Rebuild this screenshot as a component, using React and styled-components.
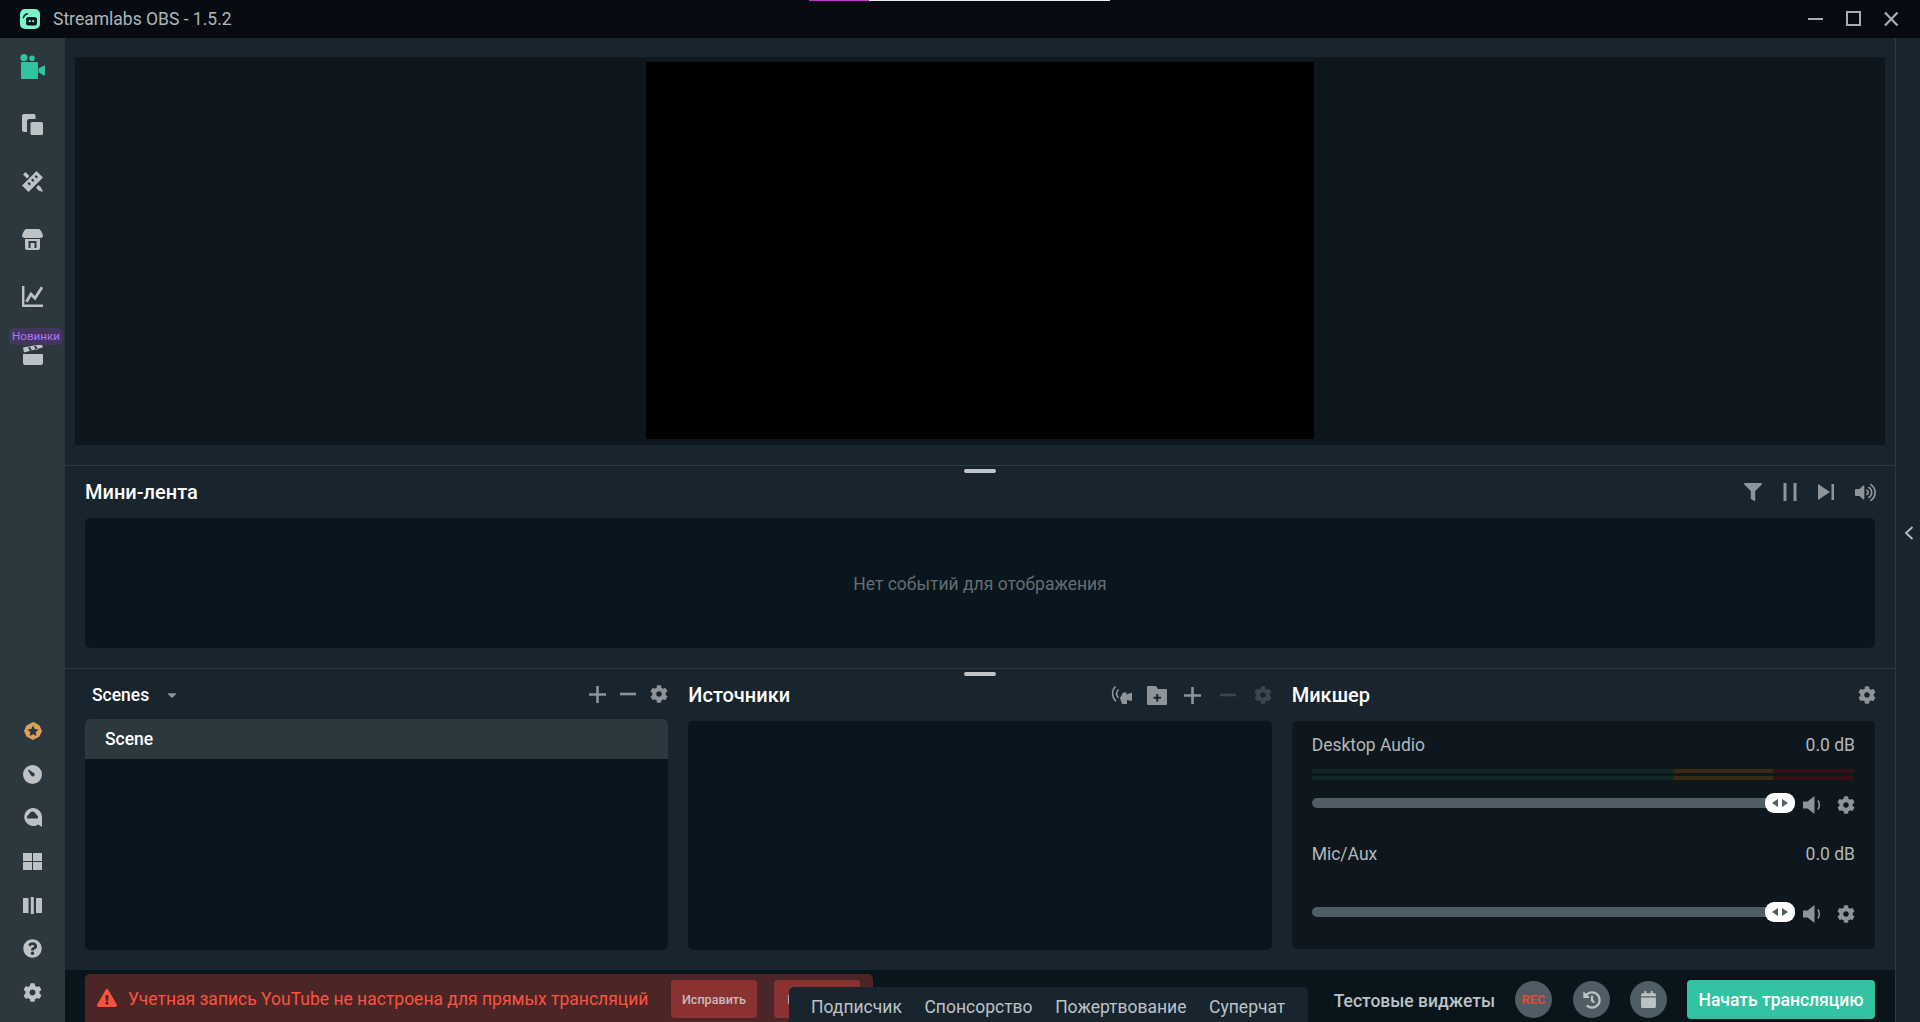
import React from "react";
import styled, { createGlobalStyle } from "styled-components";
import { FaCog, FaFilter, FaVolumeUp, FaQuestionCircle, FaExclamationTriangle, FaCaretDown, FaHistory, FaCalendar } from "react-icons/fa";

const Global = createGlobalStyle`
  html, body { margin: 0; padding: 0; background: #19252e; }
  * { box-sizing: border-box; }
  body { font-family: Roboto, "Noto Sans", sans-serif; overflow: hidden; }
`;

const Page = styled.div`
  width: 1920px; height: 1022px; display: flex; flex-direction: column; position: relative; overflow: hidden;
`;
const TitleBar = styled.header`
  height: 38px; flex: none; background: #050b11; display: flex; align-items: center; padding: 0 21px 0 20px; position: relative;
`;
const LoadStrip = styled.div`
  position: absolute; left: 809px; top: 0; width: 301px; height: 1px;
  background: linear-gradient(to right, #c233d6 0 60px, #eeeeee 60px);
`;
const Logo = styled.div`
  width: 20px; height: 20px; border-radius: 5px; background: #7cf5cb; display: flex; align-items: center; justify-content: center; color: #0a1a1d;
`;
const AppName = styled.span`
  margin-left: 13px; font-size: 17.5px; color: #afb5b9; flex: 1; padding-bottom: 1px;
`;
const WinControls = styled.div`
  display: flex; align-items: center; gap: 22px; color: #a9adb0;
`;
const Body = styled.div`
  flex: 1; display: flex; min-height: 0;
`;
const SideNav = styled.nav`
  width: 65px; flex: none; background: #2c373e; display: flex; flex-direction: column; justify-content: space-between; padding-bottom: 8px;
`;
const NavGroup = styled.div`
  display: flex; flex-direction: column;
`;
const NavItem = styled.div`
  height: ${p => p.$h}px; display: flex; align-items: center; justify-content: center; position: relative;
  color: ${p => p.$color || "#bdc2c5"};
`;
const Badge = styled.span`
  position: absolute; left: 9px; top: 2px; height: 17px; width: 54px; background: #43355e; border-radius: 5px;
  color: #ad75f5; font-size: 11.6px; line-height: 17px; text-align: center; z-index: 1;
`;
const Main = styled.main`
  flex: 1; min-width: 0; display: flex; flex-direction: column; background: #19252e;
`;
const PreviewWrap = styled.section`
  height: 427px; flex: none; padding: 19px 10px 20px;
`;
const Preview = styled.div`
  height: 100%; background: #0d171d; display: flex; justify-content: center; padding: 5px 0 6px;
`;
const Canvas = styled.div`
  width: 668px; background: #000;
`;
const Divider = styled.div`
  height: 1px; flex: none; background: #2d3a43; position: relative;
`;
const Handle = styled.span`
  position: absolute; left: 899px; top: 4px; width: 32px; height: 4px; border-radius: 2px; background: #bfc4c7;
`;
const Feed = styled.section`
  height: 202px; flex: none; padding: 0 20px;
`;
const PanelHead = styled.div`
  height: ${p => p.$h || 50}px; display: flex; align-items: center; justify-content: space-between; padding-left: ${p => p.$pl || 0}px;
`;
const PanelTitle = styled.h2`
  margin: 0; font-size: 20px; font-weight: 500; color: #fff;
`;
const Tools = styled.div`
  display: flex; align-items: center; gap: ${p => p.$gap || 0}px; color: #8e9498; margin-right: ${p => p.$mr || 0}px;
`;
const ToolIcon = styled.span`
  display: flex; align-items: center; justify-content: center; color: ${p => p.$dim ? "#3b464d" : "#8e9498"};
  margin-left: ${p => p.$ml || 0}px;
`;
const FeedBox = styled.div`
  height: 130px; background: #0a161d; border-radius: 5px; display: flex; align-items: center; justify-content: center;
  font-size: 17.5px; color: #646e73; padding-top: 1px;
`;
const Docks = styled.section`
  flex: 1; min-height: 0; padding: 0 20px; display: grid; grid-template-columns: repeat(3, 1fr); gap: 20px;
`;
const Dock = styled.div`
  display: flex; flex-direction: column;
`;
const SceneSelect = styled.div`
  display: flex; align-items: center; gap: 16px; color: #fff; font-size: 17.5px; font-weight: 500; padding-top: 1px;
`;
const SceneBox = styled.div`
  height: 231px; background: #0a161d; border-radius: 5px; overflow: hidden;
`;
const SceneRow = styled.div`
  height: 40px; background: #2c373e; border-radius: 5px 5px 0 0; display: flex; align-items: center; padding-left: 20px;
  color: #fff; font-size: 17.5px; font-weight: 500;
`;
const SourcesBox = styled.div`
  height: 229px; background: #0a161d; border-radius: 5px;
`;
const MixerBox = styled.div`
  height: 228px; background: #0d171d; border-radius: 5px; padding: 14px 20px 0 20px; display: flex; flex-direction: column; gap: 31px;
`;
const Channel = styled.div`
  display: flex; flex-direction: column;
`;
const ChannelHead = styled.div`
  height: 20px; display: flex; align-items: center; justify-content: space-between; font-size: 17.5px; color: #b3b8bb;
`;
const Meter = styled.div`
  height: 11px; margin: 14px 1px 13px 0; display: flex; flex-direction: column; gap: 3px; visibility: ${p => p.$hidden ? "hidden" : "visible"};
`;
const MeterBar = styled.div`
  height: 4px; background: linear-gradient(to right, #0d2a24 0 362px, #3a2a10 362px 461px, #360f0f 461px);
`;
const FaderRow = styled.div`
  height: 20px; display: flex; align-items: center;
`;
const Track = styled.div`
  flex: 1; height: 10px; border-radius: 5px; background: #4f5e65; position: relative;
`;
const Thumb = styled.span`
  position: absolute; right: 0; top: -5px; width: 30px; height: 20px; border-radius: 9px; background: #fff;
  display: flex; align-items: center; justify-content: center; color: #4f5e65;
`;
const FaderIcons = styled.div`
  display: flex; align-items: center; width: 60px; flex: none; padding-left: 8px; color: #8e9498; padding-top: 4px; gap: 14px;
`;
const Footer = styled.footer`
  height: 52px; flex: none; background: #09141b; padding: 0 20px; display: flex; overflow: hidden;
`;
const Alert = styled.div`
  flex: 0 0 788px; min-width: 0; overflow: hidden; margin-top: 4px; height: 60px; background: #4c2526; border-radius: 5px; display: flex; padding: 6px 0 0 13px; color: #fb5340;
`;
const AlertIcon = styled.span`
  display: flex; height: 38px; align-items: center; margin-right: 11px; padding-bottom: 2px; margin-left: -1px;
`;
const AlertText = styled.span`
  line-height: 39px; width: 543px; white-space: nowrap; font-size: 17.5px; flex: none;
`;
const AlertButton = styled.button`
  width: 86px; height: 38px; border: 0; border-radius: 4px; background: #8a3232; color: #c9bab9; font: 500 12.6px Roboto, sans-serif; margin-right: 17px; padding: 0; flex: none;
`;
const Widgets = styled.div`
  margin: 17px 0 0 -84px; width: 519px; height: 40px; background: #19252e; border-radius: 5px 5px 0 0; position: relative; z-index: 1;
  display: flex; padding: 10px 0 0 22px; gap: 22.6px; font-size: 17.5px; color: #bcc3c8; line-height: 20px; flex: none; white-space: nowrap;
`;
const Controls = styled.div`
  flex: 1; display: flex; justify-content: flex-end; align-items: flex-start; padding-top: 10px; gap: 20px;
`;
const TestLabel = styled.span`
  font-size: 17.5px; color: #bcc3c8; font-weight: 500; line-height: 42px; height: 37px; white-space: nowrap;
`;
const RoundButton = styled.div`
  width: 37px; height: 37px; margin-top: 1px; margin-right: ${p => p.$mr || 0}px; border-radius: 50%; background: #4f5e65; display: flex; align-items: center; justify-content: center;
  color: ${p => p.$color || "#bdc2c5"}; font-size: 13px; font-weight: 700;
`;
const GoLive = styled.div`
  width: 188px; height: 39px; background: #31c3a2; border-radius: 4px; color: #fff; font-size: 17.5px; font-weight: 500; display: flex; align-items: center; justify-content: center; white-space: nowrap; padding-top: 1px;
`;
const RightRail = styled.aside`
  width: 25px; flex: none; border-left: 1px solid #2d3a43; background: #19252e; display: flex; flex-direction: column; align-items: center; padding: 488px 0 0 1px; color: #b5c0c7;
`;

const Svg = ({ w, h, vb, children, ...rest }) => (
  <svg width={w} height={h} viewBox={vb || `0 0 ${w} ${h}`} fill="currentColor" {...rest}>{children}</svg>
);

const IconCamera = () => (
  <Svg w={25} h={25}>
    <circle cx="4" cy="3.700" r="3.600" fill="#31c3a2" /><circle cx="12" cy="4.200" r="2.800" fill="#31c3a2" />
    <rect x="1" y="8" width="17" height="17" rx="1" fill="#31c3a2" />
    <path d="M18.500 14.500 24 11.500c.6-.3 1 0 1 .6v8.800c0 .6-.4.9-1 .6l-5.500-3z" fill="#31c3a2" />
  </Svg>
);
const IconCopies = () => (
  <Svg w={21} h={21}>
    <rect x="8.500" y="8" width="12.500" height="13" rx="1.500" />
    <path d="M2 0h10a1.500 1.500 0 0 1 1.500 1.500V5H7.500A2.500 2.500 0 0 0 5 7.500V18H2a2 2 0 0 1-2-2V2a2 2 0 0 1 2-2z" />
  </Svg>
);
const IconTools = () => (
  <Svg w={21} h={21}>
    <path fillRule="evenodd" d="M14.500 0 21 6.500 6.500 21 0 14.500zM14 4l-1.500 1.500 2 2L16 6zM10.500 7.500 9 9l2 2 1.500-1.500zM7 11l-1.500 1.500 2 2L9 13z" />
    <path d="M1 3.500 3.500 1l4 4L5 7.500zM14 16.500l2.500-2.500 2.500 2.500L21 21l-4.500-1.500z" />
  </Svg>
);
const IconStore = () => (
  <Svg w={21} h={21}>
    <path d="M4 0h13c1.200 0 3.500 4.500 4 6.500 0 1.600-1 2.500-2.500 2.500H2.500C1 9 0 8.100 0 6.500 .5 4.500 2.800 0 4 0z" />
    <path fillRule="evenodd" d="M3 10h15v9a2 2 0 0 1-2 2H5a2 2 0 0 1-2-2zM6.500 12v7h2v-5h4v5h2v-7z" />
  </Svg>
);
const IconChart = () => (
  <Svg w={21} h={21}>
    <path d="M0 0h2.400v18.600H21V21H1a1 1 0 0 1-1-1z" />
    <path d="M4.500 15.800 9 8l4 4.300L20 1.200" fill="none" stroke="currentColor" strokeWidth="2.800" />
  </Svg>
);
const IconClapper = () => (
  <Svg w={20} h={21}>
    <path d="M0 10h20v9a2 2 0 0 1-2 2H2a2 2 0 0 1-2-2z" />
    <path fillRule="evenodd" d="m0 3.500 19-3.500.8 3.500L1 8.500zM5 3.400 7 7l2-.5-2-3.600zM11 2.300l2 3.600 2-.5-2-3.600z" />
  </Svg>
);
const IconStar = () => (
  <Svg w={18} h={18}>
    <path fillRule="evenodd" fill="#d9a35a" d="M9 0l2 .8L15.500 3.500 18 9l-2.500 5.500L9 18l-6.500-3.500L0 9l2.500-5.500zM9 3.500 7.300 7 3.500 7.500l2.800 2.700-.7 3.800L9 12.200l3.400 1.800-.7-3.800 2.800-2.700L10.700 7z" />
  </Svg>
);
const IconGauge = () => (
  <Svg w={19} h={19}>
    <path fillRule="evenodd" d="M9.500 0a9.500 9.500 0 1 1 0 19 9.500 9.500 0 0 1 0-19zM6 4.500l-1 1L8.500 11a2 2 0 0 0 3.200-1.600 2 2 0 0 0-2-2z" />
  </Svg>
);
const IconChat = () => (
  <Svg w={19} h={19}>
    <path fillRule="evenodd" d="M9.500 0A9 9 0 0 1 19 8.500V19l-3.800-2.500A9 9 0 1 1 9.500 0zm0 3.500C7.700 3.500 6.300 5.500 5.500 7 4 7.500 3.500 9 4.500 10.500h10c1-1.500 .4-3-1-3.500C13 5.500 11.300 3.500 9.500 3.500z" />
  </Svg>
);
const IconGrid = () => (
  <Svg w={19} h={17}>
    <rect width="9" height="8" /><rect x="10" width="9" height="8" /><rect y="9" width="9" height="8" /><rect x="10" y="9" width="9" height="8" />
  </Svg>
);
const IconColumns = () => (
  <Svg w={19} h={17}>
    <rect y="1" width="5.500" height="15" rx=".5" /><rect x="7.800" width="3" height="17" /><rect x="13" y="1" width="6" height="15" rx=".5" />
  </Svg>
);
const IconLogo = () => (
  <Svg w={16} h={14}>
    <path d="M2 6.500a4.500 4.500 0 0 1 4-4l-.2-1.600A6 6 0 0 0 .6 6.300z" />
    <rect x="4" y="5" width="11" height="8.500" rx="2.500" />
    <circle cx="7.800" cy="9.200" r="1.100" fill="#7cf5cb" /><circle cx="11.200" cy="9.200" r="1.100" fill="#7cf5cb" />
  </Svg>
);
const IconPause = () => (
  <Svg w={14} h={18}>
    <rect x="0.500" y="0" width="3" height="18" /><rect x="10.500" y="0" width="3" height="18" />
  </Svg>
);
const IconNext = () => (
  <Svg w={16} h={16}>
    <path d="M0 0 12 8 0 16z" /><rect x="13.500" width="2.500" height="16" />
  </Svg>
);
const IconPlus = ({ size = 17 }) => (
  <Svg w={size} h={size} vb="0 0 17 17"><path d="M7.200 0h2.600v7.200H17v2.600H9.800V17H7.200V9.800H0V7.200h7.200z" /></Svg>
);
const IconMinus = ({ size = 16 }) => (
  <Svg w={size} h={size} vb="0 0 16 16"><rect y="6.700" width="16" height="2.600" /></Svg>
);
const IconSpeaker = () => (
  <Svg w={20} h={18}>
    <path d="M0 5.500h4.500L11.500 0v18l-7-5.500H0z" />
    <path d="M15 4.500c1.600 2.800 1.600 6.200 0 9" fill="none" stroke="currentColor" strokeWidth="1.600" />
  </Svg>
);
const IconFolder = () => (
  <Svg w={20} h={19}>
    <path fillRule="evenodd" d="M1 0h8l2 3h8a1 1 0 0 1 1 1v14a1 1 0 0 1-1 1H1a1 1 0 0 1-1-1V1a1 1 0 0 1 1-1zm8.200 8v2.700H6.500v2h2.700v2.800h2v-2.800h2.800v-2h-2.800V8z" />
  </Svg>
);
const IconBroadcast = () => (
  <Svg w={21} h={18}>
    <path d="M4.500 .5C.5 4 .5 11 5 15.500" fill="none" stroke="currentColor" strokeWidth="1.500" />
    <path d="M7.500 3.500C5 6 5 9 7.500 12" fill="none" stroke="currentColor" strokeWidth="1.500" />
    <path d="M9 12 12 6.500h3.500v2L21 6.500V15l-5-1v4h-5z" />
  </Svg>
);
const IconThumb = () => (
  <Svg w={18} h={10}>
    <path d="M7 1v8L1 5zM11 1v8l6-4z" />
  </Svg>
);
const IconChevron = () => (
  <Svg w={10} h={14}>
    <path d="M8.500 1 2 7l6.500 6" fill="none" stroke="currentColor" strokeWidth="1.800" />
  </Svg>
);

const Fader = () => (
  <FaderRow>
    <Track><Thumb><IconThumb /></Thumb></Track>
    <FaderIcons><IconSpeaker /><FaCog size={18} /></FaderIcons>
  </FaderRow>
);

export default function App() {
  return (
    <Page>
      <Global />
      <TitleBar>
        <LoadStrip />
        <Logo><IconLogo /></Logo>
        <AppName>Streamlabs OBS - 1.5.2</AppName>
        <WinControls>
          <Svg w={16} h={16}><rect y="7" width="15" height="2" /></Svg>
          <Svg w={16} h={16}><path fillRule="evenodd" d="M0 0h15v15H0zM2 2v11h11V2z" /></Svg>
          <Svg w={15} h={16}><path d="M1 1.500 13.500 14.500M13.500 1.500 1 14.500" stroke="currentColor" strokeWidth="2.200" fill="none" /></Svg>
        </WinControls>
      </TitleBar>
      <Body>
        <SideNav>
          <NavGroup>
            <NavItem $h={57.5}><IconCamera /></NavItem>
            <NavItem $h={57.5}><IconCopies /></NavItem>
            <NavItem $h={57.5}><IconTools /></NavItem>
            <NavItem $h={57.5}><IconStore /></NavItem>
            <NavItem $h={57.5}><IconChart /></NavItem>
            <NavItem $h={57.5}><Badge>Новинки</Badge><IconClapper /></NavItem>
          </NavGroup>
          <NavGroup>
            <NavItem $h={43.6}><IconStar /></NavItem>
            <NavItem $h={43.6}><IconGauge /></NavItem>
            <NavItem $h={43.6}><IconChat /></NavItem>
            <NavItem $h={43.6}><IconGrid /></NavItem>
            <NavItem $h={43.6}><IconColumns /></NavItem>
            <NavItem $h={43.6}><FaQuestionCircle size={19} /></NavItem>
            <NavItem $h={43.6}><FaCog size={19} /></NavItem>
          </NavGroup>
        </SideNav>
        <Main>
          <PreviewWrap><Preview><Canvas /></Preview></PreviewWrap>
          <Divider><Handle /></Divider>
          <Feed>
            <PanelHead $h={52}>
              <PanelTitle>Мини-лента</PanelTitle>
              <Tools $gap={21} $mr={-1}>
                <FaFilter size={18} />
                <IconPause />
                <IconNext />
                <FaVolumeUp size={21} />
              </Tools>
            </PanelHead>
            <FeedBox>Нет событий для отображения</FeedBox>
          </Feed>
          <Divider><Handle /></Divider>
          <Docks>
            <Dock>
              <PanelHead $h={50} $pl={7}>
                <SceneSelect>Scenes<FaCaretDown size={14} color="#8e9498" /></SceneSelect>
                <Tools $gap={14}>
                  <IconPlus />
                  <IconMinus />
                  <FaCog size={18} />
                </Tools>
              </PanelHead>
              <SceneBox><SceneRow>Scene</SceneRow></SceneBox>
            </Dock>
            <Dock>
              <PanelHead $h={52}>
                <PanelTitle>Источники</PanelTitle>
                <Tools>
                  <IconBroadcast />
                  <ToolIcon $ml={15}><IconFolder /></ToolIcon>
                  <ToolIcon $ml={17}><IconPlus /></ToolIcon>
                  <ToolIcon $dim $ml={19}><IconMinus /></ToolIcon>
                  <ToolIcon $dim $ml={18}><FaCog size={18} /></ToolIcon>
                </Tools>
              </PanelHead>
              <SourcesBox />
            </Dock>
            <Dock>
              <PanelHead $h={52}>
                <PanelTitle>Микшер</PanelTitle>
                <Tools $mr={-1}><FaCog size={18} /></Tools>
              </PanelHead>
              <MixerBox>
                <Channel>
                  <ChannelHead><span>Desktop Audio</span><span>0.0 dB</span></ChannelHead>
                  <Meter><MeterBar /><MeterBar /></Meter>
                  <Fader />
                </Channel>
                <Channel>
                  <ChannelHead><span>Mic/Aux</span><span>0.0 dB</span></ChannelHead>
                  <Meter $hidden><MeterBar /><MeterBar /></Meter>
                  <Fader />
                </Channel>
              </MixerBox>
            </Dock>
          </Docks>
          <Footer>
            <Alert>
              <AlertIcon><FaExclamationTriangle size={20} /></AlertIcon>
              <AlertText>Учетная запись YouTube не настроена для прямых трансляций</AlertText>
              <AlertButton>Исправить</AlertButton>
              <AlertButton>Включить</AlertButton>
            </Alert>
            <Widgets>
              <span>Подписчик</span><span>Спонсорство</span><span>Пожертвование</span><span>Суперчат</span>
            </Widgets>
            <Controls>
              <TestLabel>Тестовые виджеты</TestLabel>
              <RoundButton $color="#e4483c" $mr={1}>REC</RoundButton>
              <RoundButton><FaHistory size={18} /></RoundButton>
              <RoundButton><FaCalendar size={17} /></RoundButton>
              <GoLive>Начать трансляцию</GoLive>
            </Controls>
          </Footer>
        </Main>
        <RightRail><IconChevron /></RightRail>
      </Body>
    </Page>
  );
}
